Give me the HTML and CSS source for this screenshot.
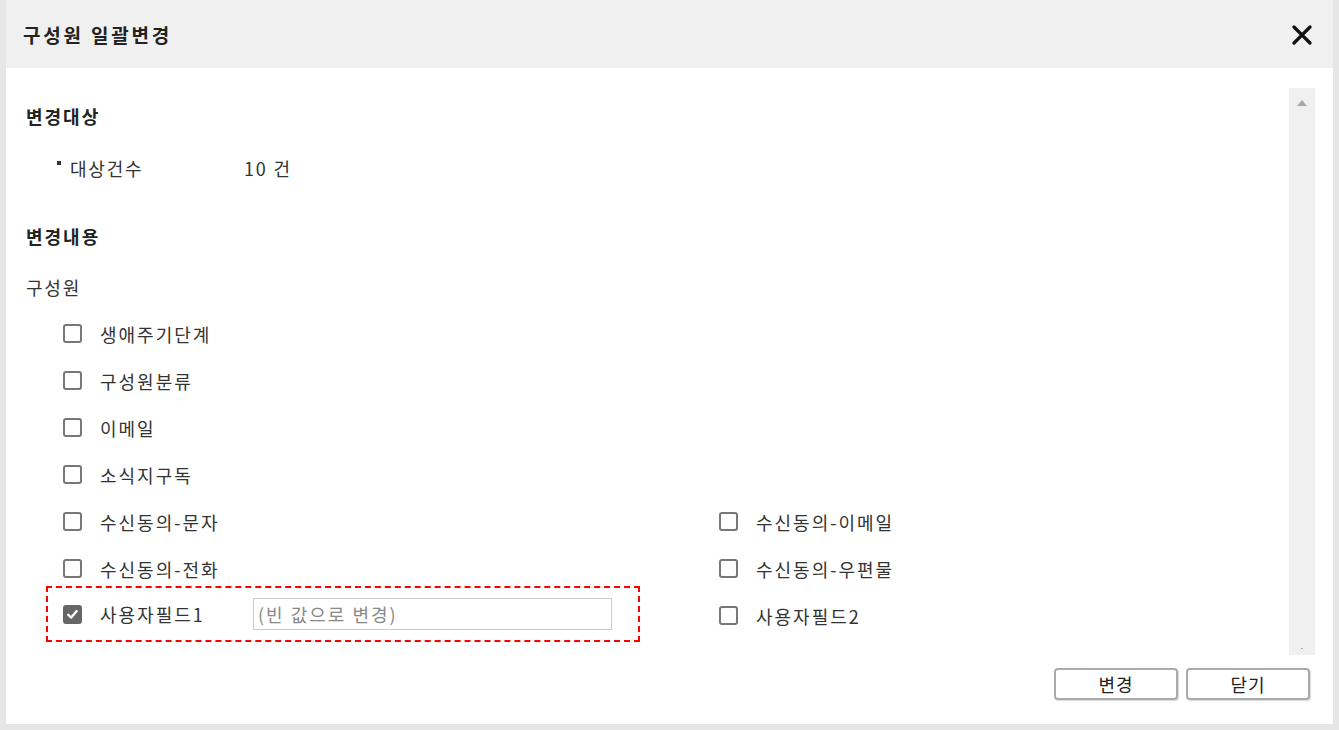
FILE: index.html
```html
<!DOCTYPE html>
<html>
<head>
    <meta charset="utf-8">
    <title>구성원 일괄변경</title>
    <link rel="stylesheet" href="styles.css">
</head>
<body>
    <div class="dialog">
        <div class="dialog-header">
            <h1>구성원 일괄변경</h1>
            <span class="close-btn">
                <svg width="20" height="20" viewBox="0 0 20 20"><path d="M2 2 L18 18 M18 2 L2 18" stroke="#111" stroke-width="3.2" stroke-linecap="round"/></svg>
            </span>
        </div>
        <div class="dialog-body">
            <div class="scroll-area">
                <div class="content">
                    <h3 class="section-title">변경대상</h3>
                    <div class="info-row">
                        <span class="bullet"></span>
                        <span class="info-label">대상건수</span>
                        <span class="info-value">10 건</span>
                    </div>

                    <h3 class="section-title second">변경내용</h3>
                    <div class="group-label">구성원</div>

                    <div class="check-grid">
                        <div class="check-item"><span class="box"></span><span class="text">생애주기단계</span></div>
                        <div></div>
                        <div class="check-item"><span class="box"></span><span class="text">구성원분류</span></div>
                        <div></div>
                        <div class="check-item"><span class="box"></span><span class="text">이메일</span></div>
                        <div></div>
                        <div class="check-item"><span class="box"></span><span class="text">소식지구독</span></div>
                        <div></div>
                        <div class="check-item"><span class="box"></span><span class="text">수신동의-문자</span></div>
                        <div class="check-item"><span class="box"></span><span class="text">수신동의-이메일</span></div>
                        <div class="check-item"><span class="box"></span><span class="text">수신동의-전화</span></div>
                        <div class="check-item"><span class="box"></span><span class="text">수신동의-우편물</span></div>
                        <div class="check-item highlight">
                            <span class="box checked">
                                <svg width="19" height="19" viewBox="0 0 19 19"><path d="M4 9.8 L7.9 13.4 L14.8 5.2" fill="none" stroke="#fff" stroke-width="3" stroke-linecap="round" stroke-linejoin="round"/></svg>
                            </span>
                            <span class="text">사용자필드1</span>
                            <input class="field-input" type="text" placeholder="(빈 값으로 변경)">
                        </div>
                        <div class="check-item"><span class="box"></span><span class="text">사용자필드2</span></div>
                    </div>
                </div>
                <div class="scrollbar">
                    <span class="arrow-up"></span>
                    <span class="arrow-down"></span>
                </div>
            </div>
            <div class="dialog-footer">
                <button class="btn">변경</button>
                <button class="btn">닫기</button>
            </div>
        </div>
    </div>
</body>
</html>
```

FILE: styles.css
```css
body {
    margin: 0;
    background-color: #e6e6e6;
    font-family: "Noto Sans CJK KR", "Noto Sans", sans-serif;
    color: #333;
}
.dialog {
    width: 1339px;
    height: 730px;
    padding: 0 6px 6px 6px;
    box-sizing: border-box;
    display: flex;
    flex-direction: column;
}
.dialog-header {
    height: 68px;
    background-color: #f0f0f0;
    display: flex;
    align-items: center;
    justify-content: space-between;
    padding: 0 21px 0 17px;
    flex-shrink: 0;
}
.dialog-header h1 {
    margin: 0;
    font-size: 19px;
    font-weight: bold;
    color: #222;
    letter-spacing: 2.8px;
}
.close-btn {
    display: flex;
    margin-top: 1px;
}
.dialog-body {
    flex: 1;
    background-color: #fff;
    padding-top: 20px;
    display: flex;
    flex-direction: column;
}
.scroll-area {
    height: 567px;
    display: flex;
}
.content {
    flex: 1;
    padding: 16px 0 0 20px;
}
.scrollbar {
    width: 26px;
    margin-right: 18px;
    background-color: #f0f0f0;
    display: flex;
    flex-direction: column;
    justify-content: space-between;
    align-items: center;
    padding: 12px 0 6px;
    box-sizing: border-box;
}
.arrow-up {
    width: 0;
    height: 0;
    border-left: 5px solid transparent;
    border-right: 5px solid transparent;
    border-bottom: 6px solid #a8a8a8;
}
.arrow-down {
    width: 2px;
    height: 1px;
    background-color: #aaa;
}
.section-title {
    margin: 0;
    font-size: 18px;
    font-weight: bold;
    line-height: 24px;
    color: #222;
    letter-spacing: 2px;
}
.section-title.second {
    margin-top: 44px;
}
.info-row {
    display: flex;
    align-items: center;
    margin-top: 28px;
    height: 24px;
    font-size: 18px;
    letter-spacing: 1.8px;
}
.bullet {
    width: 4px;
    height: 4px;
    background-color: #333;
    margin: 5px 9px 0 31px;
    align-self: flex-start;
}
.info-label {
    width: 174px;
}
.group-label {
    margin-top: 27px;
    font-size: 18px;
    line-height: 24px;
    letter-spacing: 1.8px;
}
.check-grid {
    display: grid;
    grid-template-columns: 656px 1fr;
    grid-auto-rows: 47px;
    margin-top: 11px;
    margin-left: 20px;
}
.check-item {
    display: flex;
    align-items: center;
    padding-left: 17px;
    font-size: 18px;
}
.box {
    width: 15px;
    height: 15px;
    border: 2px solid #777;
    border-radius: 3px;
    margin-right: 18px;
    display: flex;
    align-items: center;
    justify-content: center;
    flex-shrink: 0;
}
.box.checked {
    background-color: #666;
    border-color: #666;
}
.text {
    letter-spacing: 2px;
}
.highlight {
    width: 594px;
    height: 56px;
    margin-top: -6px;
    padding-left: 15px;
    border: 2px dashed #f00;
    align-self: start;
    box-sizing: border-box;
}
.highlight .text {
    width: 153px;
}
.field-input {
    width: 359px;
    height: 32px;
    border: 1px solid #ccc;
    box-sizing: border-box;
    padding: 0 4px;
    font-family: inherit;
    font-size: 18px;
    letter-spacing: 2px;
    color: #333;
}
.field-input::placeholder {
    color: #888;
}
.dialog-footer {
    display: flex;
    justify-content: flex-end;
    gap: 8px;
    padding: 13px 23px 0 0;
}
.btn {
    width: 124px;
    height: 32px;
    font-family: inherit;
    font-size: 18px;
    letter-spacing: 1px;
    color: #222;
    background-color: #fff;
    border: 2px solid #aaa;
    border-radius: 4px;
    box-shadow: 1px 1px 1px rgba(0, 0, 0, 0.15);
    cursor: pointer;
}
```
